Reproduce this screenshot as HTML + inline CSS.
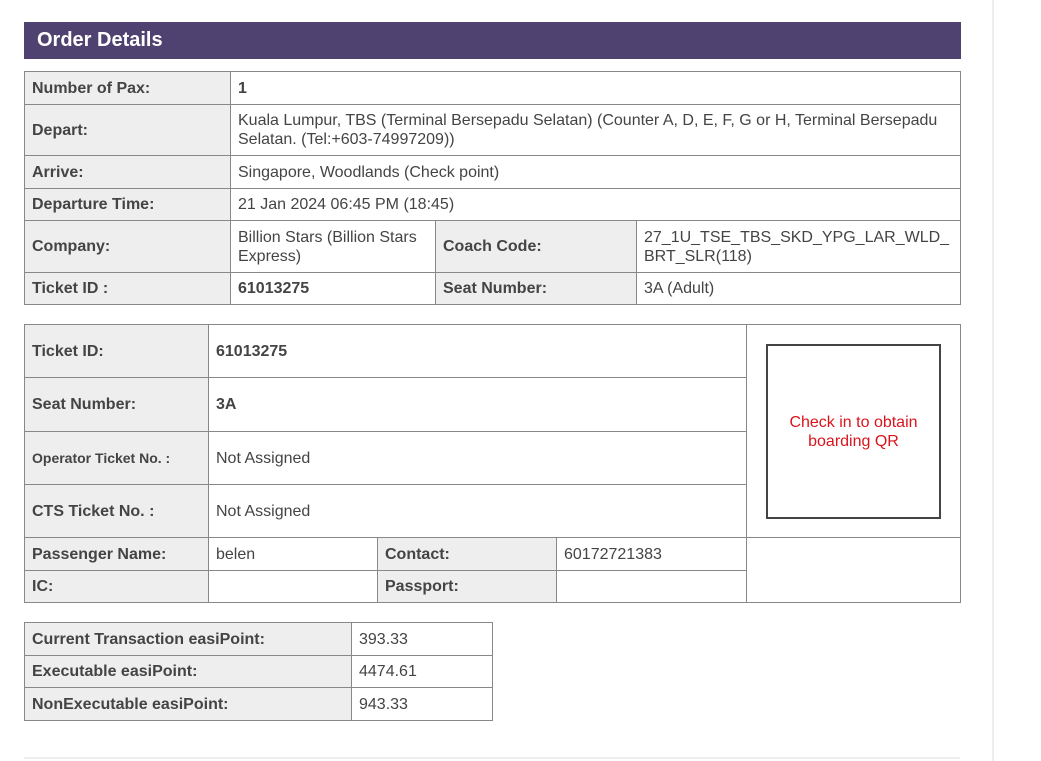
<!DOCTYPE html><html><head><style>
body{margin:0;width:1041px;height:761px;background:#fff;position:relative;overflow:hidden;font-family:"Liberation Sans",Arial,sans-serif;color:#444;font-size:16px}
.c{position:absolute;box-sizing:border-box;border:1px solid #888;display:flex;align-items:center;padding-left:7px;line-height:19px}
.l{background:#eee;font-weight:bold}
.b{font-weight:bold}
</style></head><body>
<div style="position:absolute;left:992px;top:0;width:2px;height:761px;background:#eee"></div>
<div style="position:absolute;left:24px;top:757px;width:936px;height:2px;background:#eee"></div>
<div style="position:absolute;left:24px;top:22px;width:937px;height:37px;background:#4f4270;color:#fff;font-weight:bold;font-size:20px;line-height:37px;padding-left:13px;box-sizing:border-box">Order Details</div>

<div class="c l" style="left:24px;top:71px;width:207px;height:34px">Number of Pax:</div>
<div class="c b" style="left:230px;top:71px;width:731px;height:34px">1</div>
<div class="c l" style="left:24px;top:104px;width:207px;height:52px">Depart:</div>
<div class="c" style="left:230px;top:104px;width:731px;height:52px">Kuala Lumpur, TBS (Terminal Bersepadu Selatan) (Counter A, D, E, F, G or H, Terminal Bersepadu Selatan. (Tel:+603-74997209))</div>
<div class="c l" style="left:24px;top:155px;width:207px;height:34px">Arrive:</div>
<div class="c" style="left:230px;top:155px;width:731px;height:34px">Singapore, Woodlands (Check point)</div>
<div class="c l" style="left:24px;top:188px;width:207px;height:33px">Departure Time:</div>
<div class="c" style="left:230px;top:188px;width:731px;height:33px">21 Jan 2024 06:45 PM (18:45)</div>
<div class="c l" style="left:24px;top:220px;width:207px;height:53px">Company:</div>
<div class="c" style="left:230px;top:220px;width:206px;height:53px">Billion Stars (Billion Stars Express)</div>
<div class="c l" style="left:435px;top:220px;width:202px;height:53px">Coach Code:</div>
<div class="c" style="left:636px;top:220px;width:325px;height:53px"><span>27_1U_TSE_TBS_SKD_YPG_LAR_WLD_<br>BRT_SLR(118)</span></div>
<div class="c l" style="left:24px;top:272px;width:207px;height:33px">Ticket ID :</div>
<div class="c b" style="left:230px;top:272px;width:206px;height:33px">61013275</div>
<div class="c l" style="left:435px;top:272px;width:202px;height:33px">Seat Number:</div>
<div class="c" style="left:636px;top:272px;width:325px;height:33px">3A (Adult)</div>

<div class="c l" style="left:24px;top:324px;width:185px;height:54px">Ticket ID:</div>
<div class="c b" style="left:208px;top:324px;width:539px;height:54px">61013275</div>
<div class="c l" style="left:24px;top:377px;width:185px;height:55px">Seat Number:</div>
<div class="c b" style="left:208px;top:377px;width:539px;height:55px">3A</div>
<div class="c l" style="left:24px;top:431px;width:185px;height:54px;font-size:14px">Operator Ticket No. :</div>
<div class="c" style="left:208px;top:431px;width:539px;height:54px">Not Assigned</div>
<div class="c l" style="left:24px;top:484px;width:185px;height:54px">CTS Ticket No. :</div>
<div class="c" style="left:208px;top:484px;width:539px;height:54px">Not Assigned</div>
<div class="c" style="left:746px;top:324px;width:215px;height:214px"></div>
<div style="position:absolute;left:766px;top:344px;width:175px;height:175px;box-sizing:border-box;border:2px solid #444;color:#d9141c;display:flex;align-items:center;justify-content:center;text-align:center;line-height:19px;font-size:16px">Check in to obtain<br>boarding QR</div>
<div class="c l" style="left:24px;top:537px;width:185px;height:34px">Passenger Name:</div>
<div class="c" style="left:208px;top:537px;width:170px;height:34px">belen</div>
<div class="c l" style="left:377px;top:537px;width:180px;height:34px">Contact:</div>
<div class="c" style="left:556px;top:537px;width:191px;height:34px">60172721383</div>
<div class="c l" style="left:24px;top:570px;width:185px;height:33px">IC:</div>
<div class="c" style="left:208px;top:570px;width:170px;height:33px"></div>
<div class="c l" style="left:377px;top:570px;width:180px;height:33px">Passport:</div>
<div class="c" style="left:556px;top:570px;width:191px;height:33px"></div>
<div class="c" style="left:746px;top:537px;width:215px;height:66px"></div>

<div class="c l" style="left:24px;top:622px;width:328px;height:34px">Current Transaction easiPoint:</div>
<div class="c" style="left:351px;top:622px;width:142px;height:34px">393.33</div>
<div class="c l" style="left:24px;top:655px;width:328px;height:33px">Executable easiPoint:</div>
<div class="c" style="left:351px;top:655px;width:142px;height:33px">4474.61</div>
<div class="c l" style="left:24px;top:687px;width:328px;height:34px">NonExecutable easiPoint:</div>
<div class="c" style="left:351px;top:687px;width:142px;height:34px">943.33</div>
</body></html>
